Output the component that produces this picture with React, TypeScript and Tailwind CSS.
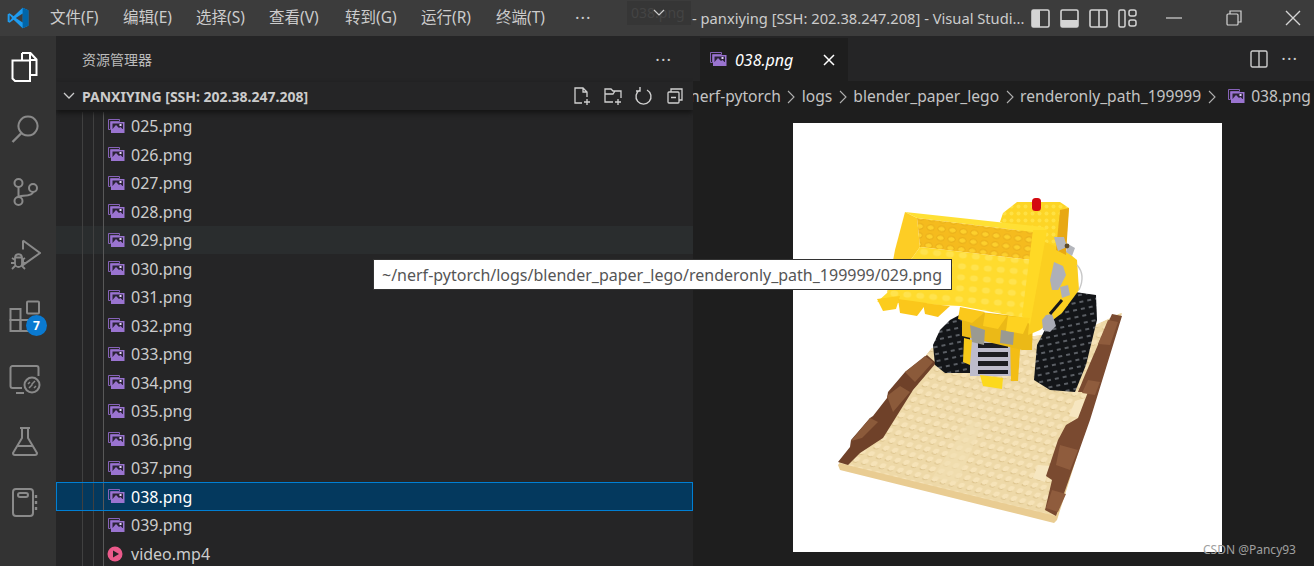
import React from "react";

const FONT = { fontFamily: '"Noto Sans", "Noto Sans CJK SC", sans-serif' };

function ImgIcon({ className = "" }: { className?: string }) {
  return (
    <svg viewBox="0 0 17 15" className={"w-[17px] h-[15px] shrink-0 " + className}>
      <path d="M0.5 0.5h11v2h-9v8h-2z" fill="none" stroke="#8662b8" strokeWidth="1" />
      <rect x="3" y="3" width="13.5" height="11" fill="#9a74d0" />
      <rect x="4.5" y="4.5" width="10.5" height="5.5" fill="#2b2338" />
      <path d="M4.5 10l3.5-4 3 3 1.5-1 2.5 2.5v3h-10.5z" fill="#9a74d0" />
      <rect x="11.5" y="5" width="2" height="2" fill="#e4d6f5" />
    </svg>
  );
}

function Row({ name, hover, selected, video }: { name: string; hover?: boolean; selected?: boolean; video?: boolean }) {
  const bg = selected ? "bg-[#04395e] border border-[#007fd4]" : hover ? "bg-[#2a2d2e]" : "";
  return (
    <div className={"relative flex items-center h-[28.5px] shrink-0 " + bg}>
      <div className={"flex self-stretch items-stretch " + (selected ? "pl-[25px]" : "pl-[26px]")}>
        <div className="w-[11px] border-l border-[#404040]" />
        <div className="w-[10px] border-l border-[#404040]" />
        <div className="w-[5px] border-l border-[#585858]" />
      </div>
      {video ? (
        <svg viewBox="0 0 16 16" className="w-[16px] h-[16px] shrink-0 ml-[-1px] mr-[8px]">
          <circle cx="8" cy="8" r="7.5" fill="#ec5a8b" />
          <path d="M6 4.5v7l6-3.5z" fill="#2a2226" />
        </svg>
      ) : (
        <ImgIcon className="mr-[6px]" />
      )}
      <span className={"text-[16px] leading-none " + (selected ? "text-white" : "text-[#cccccc]")}>{name}</span>
    </div>
  );
}

const I = ({ children, w = 32 }: { children: React.ReactNode; w?: number }) => (
  <svg viewBox="0 0 32 32" width={w} height={w} fill="none" stroke="currentColor" strokeWidth="2" className="block">
    {children}
  </svg>
);

function Slot({ children, active }: { children: React.ReactNode; active?: boolean }) {
  return (
    <div className={"h-[62.3px] w-[50px] shrink-0 flex items-center justify-center relative " + (active ? "text-white" : "")}>
      {children}
    </div>
  );
}

function Activity() {
  return (
    <div className="w-[56px] shrink-0 bg-[#333333] flex flex-col text-[#8a8a8a]">
      <Slot active>
        <I>
          <path d="M13 2h8.5l6 6.5V24H21" strokeWidth="2" />
          <path d="M21 2v7h6.5" strokeWidth="2" />
          <path d="M3.5 9.5H21V30H6L3.5 27.5z" strokeWidth="2" fill="#333333" />
          <path d="M13 2v7.5" strokeWidth="2" />
        </I>
      </Slot>
      <Slot>
        <I><path d="M19 3.5a9.5 9.5 0 1 1 -0.01 0z" /><path d="M12 20.5L3.5 29" strokeWidth="2.4" /></I>
      </Slot>
      <Slot>
        <I>
          <circle cx="9.5" cy="7" r="4" />
          <circle cx="9.5" cy="25" r="4" />
          <circle cx="24" cy="12" r="4" />
          <path d="M9.5 11v10M24 16c0 5-14 3-14.5 5" />
        </I>
      </Slot>
      <Slot>
        <I>
          <path d="M14 2.5L31 15 14 27v-6" />
          <path d="M14 2.5v9" />
          <path d="M6 19.5h7v6a3.5 3.5 0 0 1-7 0zM6 20c0-5 7-5 7 0M3 20l3 2M16 20l-3 2M2 25h4M13 25h4M3 31l3-3M16 31l-3-3" strokeWidth="1.8" />
        </I>
      </Slot>
      <Slot>
        <I>
          <rect x="1.5" y="9" width="10" height="11" />
          <rect x="1.5" y="20" width="10" height="11" />
          <rect x="11.5" y="20" width="10" height="11" />
          <rect x="18" y="1.5" width="12" height="12" rx="1" />
        </I>
        <div className="absolute left-[26px] top-[30px] w-[21px] h-[21px] rounded-full bg-[#0a7ad1] text-white text-[12px] font-bold flex items-center justify-center">7</div>
      </Slot>
      <Slot>
        <I>
          <path d="M13 25H3.5a2 2 0 0 1-2-2V5a2 2 0 0 1 2-2h24a2 2 0 0 1 2 2v8" />
          <path d="M7 30h8" />
          <circle cx="23" cy="22" r="7.5" />
          <path d="M20 25l3-3 0-1 3-3M21 19l-2 2M25 25l2-2" strokeWidth="1.5" />
        </I>
      </Slot>
      <Slot>
        <I>
          <path d="M11 3h10M13 3v10L4 28a2 2 0 0 0 2 2h20a2 2 0 0 0 2-2l-9-15V3" />
          <path d="M8.5 21h15" />
        </I>
      </Slot>
      <Slot>
        <I>
          <rect x="4" y="2" width="20" height="27" rx="3" />
          <rect x="9" y="6" width="10" height="4" rx="2" />
          <path d="M27 8v3M27 14v3M27 20v3" strokeWidth="2.4" />
        </I>
      </Slot>
    </div>
  );
}

const MENUS: [string, number][] = [
  ["文件(F)", 73],
  ["编辑(E)", 73],
  ["选择(S)", 73],
  ["查看(V)", 76],
  ["转到(G)", 76],
  ["运行(R)", 75],
  ["终端(T)", 79],
];

function TitleBar() {
  return (
    <div className="h-[36px] shrink-0 bg-[#3c3c3c] flex items-center text-[#cccccc] relative">
      <div className="w-[50px] shrink-0 pl-[7px] flex items-center">
        <svg viewBox="0 0 100 100" className="w-[22px] h-[24px]">
          <path d="M71 3L30 42 12 28 3 33v34l9 5 18-14 41 39 26-12V15z" fill="#1f9cf0" />
          <path d="M71 3l26 12v70L71 97z" fill="#0065a9" />
          <path d="M71 30L40 50l31 20z" fill="#3c3c3c" />
          <path d="M12 36l11 14-11 14z" fill="#3c3c3c" />
        </svg>
      </div>
      {MENUS.map(([m, w]) => (
        <div key={m} className="shrink-0 text-[15.5px] whitespace-nowrap" style={{ width: w }}>{m}</div>
      ))}
      <div className="w-[52px] shrink-0 text-[17px] tracking-[1px]">···</div>
      <div className="w-[64px] h-[24px] shrink-0 -mt-[11px] bg-[#363636] flex items-center justify-center relative text-[#444444]">
        <span className="absolute left-[4px] text-[14px]">038.png</span>
        <svg viewBox="0 0 12 8" className="w-[12px] h-[8px] relative"><path d="M1 1l5 5 5-5" stroke="#cccccc" strokeWidth="1.2" fill="none" /></svg>
      </div>
      <div className="w-[340px] shrink-0 pl-[1px] whitespace-nowrap text-[14.7px]">- panxiying [SSH: 202.38.247.208] - Visual Studi...</div>
      <div className="flex items-center gap-[10px] text-[#d4d4d4]">
        <svg viewBox="0 0 19 19" className="w-[19px] h-[19px]"><rect x="1" y="1" width="17" height="17" rx="1.5" fill="none" stroke="currentColor" strokeWidth="1.6" /><rect x="1" y="1" width="8" height="17" fill="currentColor" /></svg>
        <svg viewBox="0 0 19 19" className="w-[19px] h-[19px]"><rect x="1" y="1" width="17" height="17" rx="1.5" fill="none" stroke="currentColor" strokeWidth="1.6" /><rect x="1" y="11" width="17" height="7" fill="currentColor" /></svg>
        <svg viewBox="0 0 19 19" className="w-[19px] h-[19px]"><rect x="1" y="1" width="17" height="17" rx="1.5" fill="none" stroke="currentColor" strokeWidth="1.6" /><path d="M10 1v17" stroke="currentColor" strokeWidth="1.6" /></svg>
        <svg viewBox="0 0 19 19" className="w-[19px] h-[19px]" fill="none" stroke="currentColor" strokeWidth="1.5"><rect x="1" y="1" width="6" height="17" rx="1.5" /><rect x="11" y="1" width="7" height="6" rx="2" /><rect x="11" y="11" width="7" height="6" rx="2" /></svg>
      </div>
      <div className="flex items-center ml-[29px] text-[#d4d4d4]">
        <svg viewBox="0 0 16 16" className="w-[16px] h-[16px]"><path d="M0 8h16" stroke="currentColor" strokeWidth="1.2" /></svg>
        <svg viewBox="0 0 16 16" className="w-[16px] h-[16px] ml-[44px]" fill="none" stroke="currentColor" strokeWidth="1.2"><rect x="1" y="4" width="11" height="11" rx="1" /><path d="M4 4V1h11v11h-3" /></svg>
        <svg viewBox="0 0 16 16" className="w-[16px] h-[16px] ml-[43px]" fill="none" stroke="currentColor" strokeWidth="1.4"><path d="M1 1l14 14M15 1L1 15" /></svg>
      </div>
    </div>
  );
}

function Sidebar() {
  const names = ["025", "026", "027", "028", "029", "030", "031", "032", "033", "034", "035", "036", "037", "038", "039"];
  return (
    <div className="w-[637px] shrink-0 bg-[#252526] flex flex-col overflow-hidden text-[#cccccc]">
      <div className="h-[46px] shrink-0 flex items-center pl-[26px] pr-[21px] justify-between">
        <span className="text-[14px] text-[#bbbbbb]">资源管理器</span>
        <span className="text-[17px] tracking-[1px] leading-none">···</span>
      </div>
      <div className="h-[28px] shrink-0 flex items-center pl-[7px] relative shadow-[0_3px_5px_#141414] z-10">
        <svg viewBox="0 0 12 8" className="w-[12px] h-[8px] mr-[7px]"><path d="M1 1l5 5 5-5" stroke="#cccccc" strokeWidth="1.3" fill="none" /></svg>
        <span className="text-[14px] font-bold whitespace-nowrap">PANXIYING [SSH: 202.38.247.208]</span>
        <div className="ml-auto flex items-center gap-[11px] pr-[8px] text-[#d0d0d0]">
          <svg viewBox="0 0 20 20" className="w-[20px] h-[20px]" fill="none" stroke="currentColor" strokeWidth="1.3"><path d="M10 17H3V2h8l4 4v5M11 2v4h4M15 13v6M12 16h6" /></svg>
          <svg viewBox="0 0 20 20" className="w-[20px] h-[20px]" fill="none" stroke="currentColor" strokeWidth="1.3"><path d="M10 16H2V3h6l2 2h8v7M2 8h8l2-3M15 13v6M12 16h6" /></svg>
          <svg viewBox="0 0 20 20" className="w-[20px] h-[20px]" fill="none" stroke="currentColor" strokeWidth="1.4"><path d="M6 4a7.5 7.5 0 1 0 7 0M6 1v4H2" /></svg>
          <svg viewBox="0 0 20 20" className="w-[20px] h-[20px]" fill="none" stroke="currentColor" strokeWidth="1.3"><rect x="3" y="6" width="11" height="11" rx="1" /><path d="M6 6V3h11v11h-3M6 11.5h5" /></svg>
        </div>
      </div>
      <div className="flex flex-col pt-[1.75px]">
        {names.map((n) => (
          <Row key={n} name={n + ".png"} hover={n === "029"} selected={n === "038"} />
        ))}
        <Row name="video.mp4" video />
      </div>
    </div>
  );
}

function Crumb({ children }: { children: React.ReactNode }) {
  return <span className="shrink-0">{children}</span>;
}
function Sep() {
  return (
    <svg viewBox="0 0 8 14" className="w-[8px] h-[14px] shrink-0 mx-[6.5px]"><path d="M1 1l6 6-6 6" stroke="#b0b0b0" strokeWidth="1.1" fill="none" /></svg>
  );
}

function Lego() {
  return (
    <svg viewBox="793 123 429 429" className="w-[429px] h-[429px] block">
      <defs>
        <pattern id="studs" width="9" height="9" patternUnits="userSpaceOnUse" patternTransform="rotate(14) skewX(-24)">
          <rect width="9" height="9" fill="#eed9a8" />
          <circle cx="4.5" cy="4.5" r="2.9" fill="#f6e3b8" />
          <path d="M2 6.5a3 3 0 0 0 5 0" stroke="#dcc28a" strokeWidth="1" fill="none" />
        </pattern>
        <pattern id="tread" width="8" height="7" patternUnits="userSpaceOnUse" patternTransform="rotate(-12)">
          <rect width="8" height="7" fill="#131518" />
          <rect x="1" y="1" width="4" height="2" fill="#5a5e64" />
        </pattern>
        <pattern id="wall" width="11" height="9" patternUnits="userSpaceOnUse" patternTransform="rotate(7)">
          <rect width="11" height="9" fill="#f5bb1e" />
          <ellipse cx="5.5" cy="4.5" rx="3.8" ry="2.8" fill="#fdd02c" stroke="#e2a315" strokeWidth="0.8" />
        </pattern>
        <pattern id="floor" width="13" height="11" patternUnits="userSpaceOnUse" patternTransform="rotate(5)">
          <rect width="13" height="11" fill="#ffdb2e" />
          <ellipse cx="6.5" cy="5.5" rx="4" ry="3" fill="#ffe34e" />
        </pattern>
        <pattern id="cab" width="7" height="7" patternUnits="userSpaceOnUse">
          <rect width="7" height="7" fill="#fdd526" />
          <circle cx="3.5" cy="3.5" r="2" fill="#ffe144" />
        </pattern>
      </defs>
      {/* base plate */}
      <path d="M838 465L932 348 960 345 1085 330 1122 313 1057 520 1054 523 840 470z" fill="#e9cc92" />
      <path d="M839 463L932 348 960 345 1085 330 1121 313 1056 516z" fill="url(#studs)" />
      <path d="M1075 401L1085 398 1079 418 1069 416z" fill="#f6e6c0" />
      <path d="M1038 465L1050 466 1045 482 1033 478z" fill="#f6e6c0" />
      <path d="M970 420L982 425 958 482 932 478z" fill="#f2dfb2" opacity="0.6" />
      {/* left brown strip */}
      <path d="M838 462L850 447 851 440 870 418 873 416 887 398 888 392 905 372 927 355 936 363 913 390 883 438 860 453 848 465z" fill="#6f4129" />
      <path d="M851 441L870 418 878 422 862 438zM905 372L925 356 933 362 915 382zM887 396L900 386 910 392 893 412z" fill="#8b5a3a" />
      {/* right brown strip */}
      <path d="M1112 314L1122 316 1114 342 1090 420 1056 516 1045 510 1052 480 1046 476 1058 440 1066 425 1078 418 1088 392 1078 392 1085 375 1100 340z" fill="#7a4a30" />
      <path d="M1108 320L1118 322 1110 345 1098 344zM1088 380L1100 382 1095 395 1082 393zM1060 445L1078 450 1070 470 1056 465zM1052 490L1066 494 1058 512 1046 508z" fill="#8f5c3d" />
      {/* tracks */}
      <path d="M950 320L965 312 975 325 970 373 945 373 935 365 933 345 940 330z" fill="url(#tread)" />
      <path d="M1075 292L1096 295 1097 320 1086 365 1075 392 1050 390 1034 380 1037 345 1050 320z" fill="url(#tread)" />
      {/* centre */}
      <path d="M970 337H1012V376H970z" fill="#bdbbcc" />
      <path d="M978 343H1008V348H978zM978 352H1008V357H978zM978 361H1008V366H978zM978 370H1008V374H978z" fill="#1c1c22" />
      <path d="M980 375L1003 378 1002 389 983 386z" fill="#fcd91c" />
      <path d="M1010 335L1021 335 1018 381 1011 381z" fill="#f3bd15" />
      <path d="M964 338L972 340 970 365 963 362z" fill="#f7c818" />
      <path d="M962 310L1033 318 1032 350 1022 350 962 336z" fill="#ebb917" />
      <path d="M970 325L985 330 984 345 972 342zM1001 330L1014 332 1013 345 1000 343z" fill="#9a9a92" />
      {/* body */}
      <path d="M1038 228L1077 260 1079 290 1062 313 1040 330 1028 335z" fill="#fbcf20" />
      <path d="M1003 213L1017 202 1060 202 1069 208 1065 250 1040 240 1000 222z" fill="url(#cab)" />
      <path d="M1060 210L1069 208 1066 255 1056 250z" fill="#e8a814" />
      {/* red light */}
      <rect x="1032" y="198" width="9" height="13" rx="3.5" fill="#d40a10" />
      {/* bucket */}
      <path d="M905 212L917 218 920 247 887 293 895 250z" fill="#fdcd25" />
      <path d="M905 212L1043 227 1047 230 1033 232 917 218z" fill="#ffe034" />
      <path d="M917 218L1033 232 1032 260 920 247z" fill="url(#wall)" />
      <path d="M920 247L1032 260 1024 318 960 306 877 302 887 293z" fill="url(#floor)" />
      <path d="M1033 230L1047 230 1030 325 1022 316z" fill="#ffd925" />
      {/* teeth */}
      <path d="M877 299L900 296 896 309 883 311z" fill="#fccc1d" />
      <path d="M898 299L927 303 917 316 900 313z" fill="#fbc71b" />
      <path d="M923 303L950 306 938 317 925 314z" fill="#fac51a" />
      <path d="M960 307L985 312 972 323 958 319z" fill="#fbc81b" />
      <path d="M985 313L1007 316 998 329 983 326z" fill="#fccc1d" />
      <path d="M1008 316L1030 318 1023 334 1006 331z" fill="#fed220" />
      {/* grey parts */}
      <path d="M1054 237L1064 237 1067 247 1058 251zM1068 244L1075 248 1072 256 1066 252z" fill="#b4b6bc" />
      <path d="M1054 262L1063 266 1066 275 1061 285 1058 290 1052 290 1050 280z" fill="#aeb0b8" />
      <path d="M1060 287L1068 285 1070 295 1062 298z" fill="#aeb0b8" />
      <path d="M1046 315L1052 314 1056 326 1050 332 1043 330 1042 320z" fill="#a8aab4" />
      <path d="M1050 314L1062 300" stroke="#17171c" strokeWidth="3" />
      <circle cx="1067" cy="246" r="2.4" fill="#5c4a2c" />
      <path d="M1077 265Q1086 275 1079 290" stroke="#c8c8c8" strokeWidth="1.4" fill="none" />
    </svg>
  );
}

function Editor() {
  return (
    <div className="flex-1 min-w-0 bg-[#1e1e1e] flex flex-col overflow-hidden">
      <div className="h-[45px] shrink-0 bg-[#252526] flex items-end">
        <div className="ml-[7px] w-[148px] h-[43px] bg-[#1e1e1e] flex items-center pl-[10px] text-white shrink-0">
          <ImgIcon />
          <span className="italic text-[16px] ml-[8px]">038.png</span>
          <svg viewBox="0 0 12 12" className="w-[12px] h-[12px] ml-[30px]"><path d="M1 1l10 10M11 1L1 11" stroke="#ffffff" strokeWidth="1.5" fill="none" /></svg>
        </div>
        <div className="ml-auto h-[45px] flex items-center gap-[13px] pr-[16px] text-[#cccccc]">
          <svg viewBox="0 0 18 18" className="w-[18px] h-[18px]" fill="none" stroke="currentColor" strokeWidth="1.4"><rect x="1" y="1" width="16" height="16" rx="1.5" /><path d="M9 1v16" /></svg>
          <span className="text-[17px] tracking-[1px] leading-none">···</span>
        </div>
      </div>
      <div className="h-[29px] pt-[2px] shrink-0 flex items-center whitespace-nowrap text-[15.6px] text-[#c4c4c4] overflow-hidden -ml-[3px]">
        <Crumb>nerf-pytorch</Crumb>
        <Sep />
        <Crumb>logs</Crumb>
        <Sep />
        <Crumb>blender_paper_lego</Crumb>
        <Sep />
        <Crumb>renderonly_path_199999</Crumb>
        <Sep />
        <ImgIcon className="ml-[6px] mr-[6px]" />
        <Crumb>038.png</Crumb>
      </div>
      <div className="pt-[13px] pl-[100px]">
        <div className="w-[429px] h-[429px] bg-white">
          <Lego />
        </div>
      </div>
    </div>
  );
}

export default function App() {
  return (
    <div className="relative w-[1314px] h-[566px] overflow-hidden flex flex-col bg-[#1e1e1e]" style={FONT}>
      <TitleBar />
      <div className="flex flex-1 min-h-0">
        <Activity />
        <Sidebar />
        <Editor />
      </div>
      <div className="absolute left-[373px] top-[259px] w-[579px] h-[31px] bg-white border border-[#333333] flex items-center pl-[8px] text-[16px] text-[#555555] whitespace-nowrap z-20">
        ~/nerf-pytorch/logs/blender_paper_lego/renderonly_path_199999/029.png
      </div>
      <div className="absolute left-[1203px] top-[541px] text-[12px] text-[#a0a0a0] whitespace-nowrap z-20">CSDN @Pancy93</div>
    </div>
  );
}
